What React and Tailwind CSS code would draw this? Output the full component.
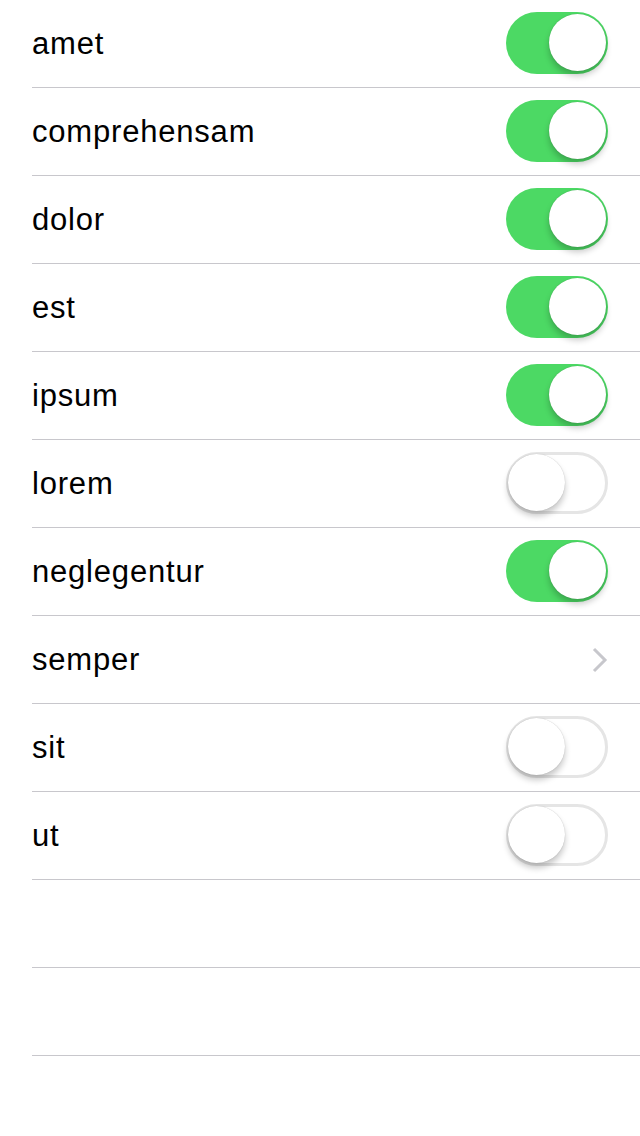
const rows = [
  ["amet", "on"],
  ["comprehensam", "on"],
  ["dolor", "on"],
  ["est", "on"],
  ["ipsum", "on"],
  ["lorem", "off"],
  ["neglegentur", "on"],
  ["semper", "link"],
  ["sit", "off"],
  ["ut", "off"],
  ["", "none"],
  ["", "none"]
];

function Toggle({ on }) {
  return (
    <div className={`relative -mt-[2px] h-[62px] w-[102px] rounded-full ${on ? "bg-[#4cd964]" : "border-[3px] border-[#e5e5e5] bg-white"}`}>
      <div
        className={`absolute h-[57px] w-[57px] rounded-full bg-white shadow-[0_5px_6px_rgba(0,0,0,0.22),0_0_1px_rgba(0,0,0,0.25)] ${on ? "right-[2px] top-[2px]" : "left-[-1px] top-[-1px]"}`}
      />
    </div>
  );
}

function Chevron() {
  return (
    <svg width="18" height="28" viewBox="0 0 18 28" className="mr-[-1px]">
      <path d="M3 3 L14 14 L3 25" fill="none" stroke="#c7c7cc" strokeWidth="3" />
    </svg>
  );
}

export default function App() {
  return (
    <div className="min-h-[1136px] bg-white font-['Liberation_Sans',Arial,sans-serif] text-black">
      {rows.map(([label, kind], i) => (
        <div key={i} className="ml-8 flex h-[88px] items-center justify-between border-b border-[#c8c7cc] pr-8">
          <span className="-mt-[1px] text-[31px] leading-none tracking-[0.8px]">{label}</span>
          {kind === "on" && <Toggle on />}
          {kind === "off" && <Toggle on={false} />}
          {kind === "link" && <Chevron />}
        </div>
      ))}
    </div>
  );
}
